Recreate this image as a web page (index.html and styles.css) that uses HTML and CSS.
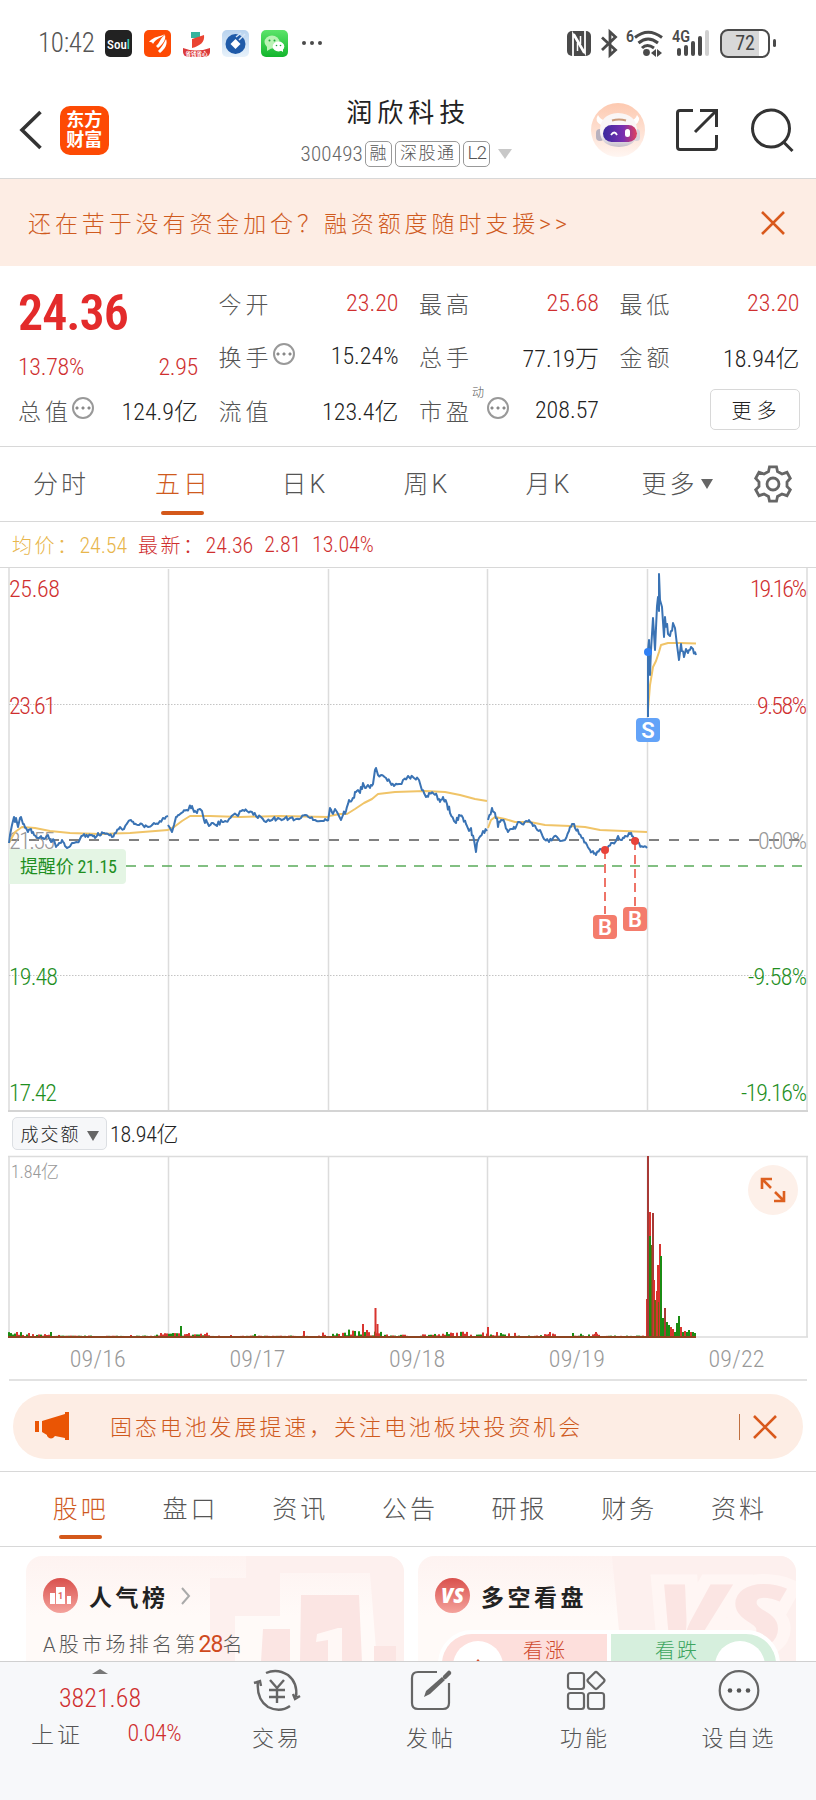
FILE: index.html
```html
<!DOCTYPE html>
<html lang="zh-CN">
<head>
  <meta charset="UTF-8">
  <title>润欣科技 300493</title>
  <link rel="stylesheet" href="styles.css">
</head>
<body>

<div class="status-bar">
  <span class="clock">10:42</span>
  <div class="app-icons">
    <span class="app soul">Sou<i>l</i></span>
    <span class="app east">
      <svg width="27" height="27" viewBox="0 0 27 27" fill="#fff"><path d="M5 12C10 6 16 7 21 4C18 8 12 8 9 14C8 12 7 12 5 12Z"/><path d="M12 16C16 13 16 8 21 5C22 9 20 13 14 18Z"/><path d="M14 21C18 17 20 13 22 9C24 14 21 19 16 23Z"/></svg>
    </span>
    <span class="app">
      <svg width="27" height="27" viewBox="0 0 27 27"><path d="M8 2h9v6h-9z" fill="#35b39c"/><path d="M9 9L21 5C22 12 17 16 9 18Z" fill="#ea4432"/><path d="M0 18Q13 23 27 18V23Q27 27 22 27H5Q0 27 0 23Z" fill="#dc3a3a"/><text x="13.5" y="25.5" font-size="5.5" font-weight="700" fill="#fff" text-anchor="middle">省钱省心</text></svg>
    </span>
    <span class="app ccb">
      <svg width="27" height="27" viewBox="0 0 27 27"><circle cx="13.5" cy="14" r="10" fill="#1f5aa8"/><path d="M13.5 9l5 5-5 5-5-5z" fill="#fff"/><path d="M14 7L19 3M17 10L23 4" stroke="#d8e6f6" stroke-width="1.5"/></svg>
    </span>
    <span class="app wechat">
      <svg width="27" height="27" viewBox="0 0 27 27"><ellipse cx="11" cy="12" rx="7.5" ry="6.5" fill="#b9f3b4"/><path d="M6 16v5l5-3z" fill="#b9f3b4"/><ellipse cx="17.5" cy="16.5" rx="5.8" ry="5" fill="#fff"/><path d="M19 20l3 2v-4z" fill="#fff"/><g fill="#1da838"><circle cx="8.5" cy="10.5" r="1"/><circle cx="13.5" cy="10.5" r="1"/><circle cx="15.5" cy="15.5" r=".8"/><circle cx="19.5" cy="15.5" r=".8"/></g></svg>
    </span>
  </div>
  <svg class="dots" width="20" height="6" viewBox="0 0 20 6" fill="#4a4a4a"><circle cx="2" cy="3" r="2"/><circle cx="10" cy="3" r="2"/><circle cx="18" cy="3" r="2"/></svg>
  <div class="signals">
    <svg class="nfc" width="24" height="25" viewBox="0 0 24 25"><rect width="24" height="25" rx="5" fill="#4a4a4a"/><path d="M6 26V3L17 22" fill="none" stroke="#fff" stroke-width="1.8"/><path d="M18 -1V22L7 3" fill="none" stroke="#fff" stroke-width="1.8"/><path d="M10.500 12v8M13.500 5v8" stroke="#fff" stroke-width="1.500"/></svg>
    <svg class="bt" width="17" height="27" viewBox="0 0 17 27" fill="none" stroke="#4a4a4a" stroke-width="2.800"><path d="M1 7.500L14.500 20L9 25V2L14.500 7L1 20"/></svg>
    <svg class="wifi" width="38" height="28" viewBox="0 0 38 28"><text x="0" y="13" font-size="17" font-weight="600" fill="#4a4a4a" textLength="8" lengthAdjust="spacingAndGlyphs">6</text><g fill="none" stroke="#4a4a4a" stroke-width="3"><path d="M9 8.500Q22 -2 36 8.500"/><path d="M12.500 14Q22 6 32 14"/><path d="M16 19Q21 14 28 19"/></g><circle cx="20.500" cy="23.500" r="3.400" fill="#4a4a4a"/><path d="M25 24l5-4v8zM31 20l5 4-5 4z" fill="#4a4a4a"/></svg>
    <svg class="cell" width="38" height="28" viewBox="0 0 38 28"><text x="0" y="13" font-size="17" font-weight="600" fill="#4a4a4a" textLength="18" lengthAdjust="spacingAndGlyphs">4G</text><g fill="#4a4a4a"><rect x="5" y="19" width="4" height="8" rx="2"/><rect x="12" y="16" width="4" height="11" rx="2"/><rect x="19" y="12" width="4" height="15" rx="2"/><rect x="26" y="7" width="4" height="20" rx="2"/></g><rect x="33" y="1" width="4" height="26" rx="2" fill="#d0d0d0"/></svg>
    <span class="battery"><b>72</b></span>
    <span class="battery-tip"></span>
  </div>
</div>

<header class="header">
  <svg class="back" width="24" height="40" viewBox="0 0 24 40" fill="none" stroke="#333" stroke-width="3.600"><path d="M21.500 2L3 20L21.500 38"/></svg>
  <div class="logo">东方<br>财富</div>
  <div class="title">
    <h1>润欣科技</h1>
    <div class="code">
      <span class="num">300493</span>
      <span class="tag">融</span>
      <span class="tag">深股通</span>
      <span class="tag l2">L2</span>
      <span class="tri"></span>
    </div>
  </div>
  <svg class="robot" width="54" height="54" viewBox="0 0 54 54">
    <defs>
      <linearGradient id="sky" x1="0" y1="0" x2="0" y2="1"><stop offset="0" stop-color="#fdc9b0"/><stop offset="1" stop-color="#fff6f2"/></linearGradient>
      <linearGradient id="visor"><stop offset="0" stop-color="#3a2b9e"/><stop offset=".6" stop-color="#7a2fb0"/><stop offset="1" stop-color="#e0405c"/></linearGradient>
      <linearGradient id="shell" x1="0" y1="0" x2="0" y2="1"><stop offset=".6" stop-color="#faf6f6"/><stop offset="1" stop-color="#c6bfca"/></linearGradient>
    </defs>
    <circle cx="27" cy="27" r="27" fill="url(#sky)"/>
    <path d="M10 22Q3 18 7 12Q10 18 15 17M44 22Q51 17 46 12Q44 18 39 17" fill="#fff"/>
    <rect x="5" y="26" width="8" height="12" rx="4" fill="#b9b2bf"/><rect x="42" y="26" width="7" height="12" rx="3.500" fill="#d8d2da"/>
    <path d="M9 28Q9 11 27 10Q46 11 46 28Q47 43 28 44Q9 43 9 28Z" fill="url(#shell)"/>
    <path d="M21 17.500q7-2 14 0" stroke="#c99878" stroke-width="2" fill="none"/>
    <rect x="12" y="22" width="34" height="17" rx="8.500" fill="url(#visor)"/>
    <path d="M20 32q3.500-5 6 0" fill="none" stroke="#fff" stroke-width="1.800"/><rect x="34" y="26" width="5" height="8" rx="2.500" fill="#fff"/>
  </svg>
  <svg class="share" width="42" height="42" viewBox="0 0 42 42" fill="none" stroke="#333" stroke-width="3"><path d="M17 1.500H4Q1.500 1.500 1.500 4V38Q1.500 40.500 4 40.500H38Q40.500 40.500 40.500 38V26"/><path d="M24 1.500H40.500V18M40 2L19 23"/></svg>
  <svg class="search" width="44" height="44" viewBox="0 0 44 44" fill="none" stroke="#333" stroke-width="3"><circle cx="21" cy="20.500" r="18.500"/><path d="M33.500 34L42.500 43"/></svg>
</header>

<div class="promo">
  <span>还在苦于没有资金加仓？融资额度随时支援&gt;&gt;</span>
  <svg width="24" height="24" viewBox="0 0 24 24" stroke="#d9591c" stroke-width="2.600"><path d="M1 1L23 23M23 1L1 23"/></svg>
</div>

<section class="quote">
  <div class="main-price">
    <strong>24.36</strong>
    <p class="num red"><span>13.78%</span><span>2.95</span></p>
  </div>
  <div class="cell"><label>今开</label><span class="num red">23.20</span></div>
  <div class="cell"><label>最高</label><span class="num red">25.68</span></div>
  <div class="cell"><label>最低</label><span class="num red">23.20</span></div>
  <div class="cell"><label>换手</label><i class="more-dots"></i><span class="num">15.24%</span></div>
  <div class="cell"><label>总手</label><span class="num">77.19万</span></div>
  <div class="cell"><label>金额</label><span class="num">18.94亿</span></div>
  <div class="cell"><label>总值</label><i class="more-dots"></i><span class="num">124.9亿</span></div>
  <div class="cell"><label>流值</label><span class="num">123.4亿</span></div>
  <div class="cell"><label>市盈<sup>动</sup></label><i class="more-dots"></i><span class="num">208.57</span></div>
  <div class="cell"><button class="more-btn">更多</button></div>
</section>

<nav class="period-tabs">
  <a>分时</a>
  <a class="active">五日</a>
  <a>日K</a>
  <a>周K</a>
  <a>月K</a>
  <a class="more">更多<span class="tri dark"></span></a>
  <svg width="38" height="38" viewBox="0 0 38 38" fill="none" stroke="#666" stroke-width="2.800"><path d="M15.500 1.800H22.500L23.500 6.500L28 9L33 7.300L36.300 13.300L33 17V21.500L36.300 24.700L33 30.700L28 29L23.500 31.500L22.500 36.200H15.500L14.500 31.500L10 29L5 30.700L1.700 24.700L5 21.500V17L1.700 13.300L5 7.300L10 9L14.500 6.500Z"/><circle cx="19" cy="19" r="6"/></svg>
</nav>

<div class="legend num">
  <span class="avg"><em>均价：</em>24.54</span>
  <span><em>最新：</em>24.36</span>
  <span>2.81</span>
  <span>13.04%</span>
</div>

<svg class="chart" width="816" height="544" viewBox="0 568 816 544">
  <g class="grid">
    <path d="M9 568V1111M168.500 569V1111M328.500 569V1111M487.500 569V1111M647.500 569V1111M807 568V1111"/>
    <path class="heavy" d="M8 1111H808"/>
    <path class="dotted" d="M9 704.500H807M9 975.500H807"/>
  </g>
  <path class="zero" d="M9 840H807"/>
  <path class="remind" d="M126 866H807"/>
  <g class="labels">
    <text class="flat" x="9" y="849" textLength="46">21.55</text>
  </g>
  <g id="priceLines"></g>
  <g class="labels">
    <text class="up" x="9" y="597" textLength="51">25.68</text>
    <text class="up" x="9" y="714" textLength="47">23.61</text>
    <text class="down" x="9" y="985" textLength="49">19.48</text>
    <text class="down" x="9" y="1101" textLength="48">17.42</text>
    <text class="up" x="750" y="597" textLength="57">19.16%</text>
    <text class="up" x="757" y="714" textLength="50">9.58%</text>
    <text class="flat" x="758" y="849" textLength="49">0.00%</text>
    <text class="down" x="748" y="985" textLength="59">-9.58%</text>
    <text class="down" x="741" y="1101" textLength="66">-19.16%</text>
  </g>
  <path d="M9 849H122Q126 849 126 853V880Q126 884 122 884H9Z" fill="#e4f5e4"/>
  <text class="remind-text" x="20" y="873" textLength="97">提醒价 21.15</text>
  <path class="trade" d="M605 850V914M635 841V907"/>
  <circle cx="605" cy="850" r="4" fill="#e8433a"/>
  <circle cx="635" cy="841" r="4" fill="#e8433a"/>
  <circle cx="648" cy="652" r="4" fill="#2f80f5"/>
  <g class="marks">
    <rect x="593" y="915" width="24" height="24" rx="4" fill="#f47c6c"/><text x="605" y="935">B</text>
    <rect x="623" y="907" width="24" height="24" rx="4" fill="#f47c6c"/><text x="635" y="927">B</text>
    <rect x="636" y="718" width="24" height="24" rx="4" fill="#63a3f8"/><text x="648" y="738">S</text>
  </g>
</svg>

<div class="volume-head num">
  <button>成交额<span class="tri dark"></span></button>
  <span>18.94亿</span>
</div>

<div class="volume">
  <svg class="chart" width="816" height="182" viewBox="0 1156 816 182">
    <g class="grid"><path d="M8 1156.500H808M9 1156V1337M168.500 1156V1337M328.500 1156V1337M487.500 1156V1337M647.500 1156V1337M807 1156V1337M8 1337H808"/></g>
    <g id="bars"></g>
    <text class="scale" x="11" y="1178" textLength="48">1.84亿</text>
  </svg>
  <span class="expand">
    <svg width="26" height="26" viewBox="0 0 26 26" fill="none" stroke="#dd6020" stroke-width="2.600"><path d="M12 2H2V12M2 2L11 11M15 15L24 24M24 14V24H14"/></svg>
  </span>
</div>

<div class="dates num"><span>09/16</span><span>09/17</span><span>09/18</span><span>09/19</span><span>09/22</span></div>

<div class="notice">
  <svg width="34" height="29" viewBox="0 0 34 29" fill="#ea5504"><path d="M0 9h4v11H0zM7 9L30 2V0h4v28h-4v-2l-10-2q-4 5-8 0v-1L7 20z"/></svg>
  <span>固态电池发展提速，关注电池板块投资机会</span>
  <i></i>
  <svg width="24" height="24" viewBox="0 0 24 24" stroke="#d9591c" stroke-width="2.600"><path d="M1 1L23 23M23 1L1 23"/></svg>
</div>

<nav class="info-tabs">
  <a class="active">股吧</a><a>盘口</a><a>资讯</a><a>公告</a><a>研报</a><a>财务</a><a>资料</a>
</nav>

<section class="cards">
  <div class="card">
    <svg class="card-bg" width="194" height="106" viewBox="0 0 194 106"><path d="M36 0H194V106H167L160 17H70V60H25V106H0V22H36Z" fill="#fdf0ee"/><path d="M91 39H149L152 106H90ZM53 73H80V106H51ZM164 90H186V106H164Z" fill="#fbe5e3"/><path d="M107 78L128 72H132V106H118V84L106 86Z" fill="#fff8f6"/></svg>
    <h3>
      <svg width="35" height="35" viewBox="0 0 35 35"><defs><linearGradient id="ball" x1="0" y1="0" x2="0" y2="1"><stop offset="0" stop-color="#d9504c"/><stop offset="1" stop-color="#f4a29c"/></linearGradient></defs><circle cx="17.500" cy="17.500" r="17.500" fill="url(#ball)"/><path d="M7 15h5v11H7zM13 9h9v17h-9zM24 18h4v8h-4z" fill="#fff"/><text x="17.500" y="21" font-size="9" font-weight="700" text-anchor="middle" fill="#df6560">1</text></svg>
      人气榜
      <svg width="11" height="18" viewBox="0 0 11 18" fill="none" stroke="#aaa" stroke-width="2"><path d="M2 1L9 9L2 17"/></svg>
    </h3>
    <p>A股市场排名第<b>28</b>名</p>
  </div>
  <div class="card">
    <svg class="card-bg" width="184" height="106" viewBox="0 0 184 106"><path d="M0 0H184V106H10Z" fill="#fdf0ee"/><text class="vs-bg" x="44" y="92" textLength="130" lengthAdjust="spacingAndGlyphs">VS</text></svg>
    <h3>
      <svg width="35" height="35" viewBox="0 0 35 35"><circle cx="17.500" cy="17.500" r="17.500" fill="url(#ball)"/><text class="vs" x="6" y="25" textLength="23" lengthAdjust="spacingAndGlyphs">VS</text></svg>
      多空看盘
    </h3>
    <div class="vote">
      <div class="bull"><i><svg width="50" height="50" viewBox="0 0 50 50"><path d="M25 18l12 14H13z" fill="#d8502e"/></svg></i>看涨</div>
      <div class="bear">看跌<i></i></div>
    </div>
  </div>
</section>

<footer class="bottom-bar">
  <div class="index">
    <span class="tri up"></span>
    <span class="num red">3821.68</span>
    <p><label>上证</label><span class="num red">0.04%</span></p>
  </div>
  <a>
    <svg width="48" height="42" viewBox="0 0 48 42" fill="none" stroke="#666" stroke-width="2.400"><path d="M13 4Q24 -1 35 6Q45 14 43 28M47 27L42 30L40 25"/><path d="M37 37Q27 44 15 38Q3 30 5 12M1 14L7 12L8 17"/><path d="M17 11L24 19L31 11M16 21H32M16 28H32M24 19V34"/></svg>
    交易
  </a>
  <a>
    <svg width="42" height="42" viewBox="0 0 42 42" fill="none" stroke="#666" stroke-width="2.200"><path d="M27 3H8Q2 3 2 9V34Q2 40 8 40H33Q39 40 39 34V14"/><path d="M14 28L16 22L32 8L35 11L20 25Z" fill="#666" stroke="none"/><path d="M35 8L39 4" stroke-width="4.500" stroke-linecap="round"/></svg>
    发帖
  </a>
  <a>
    <svg width="40" height="42" viewBox="0 0 40 42" fill="none" stroke="#666" stroke-width="2.200"><rect x="3" y="4" width="16" height="16" rx="2.500"/><rect x="3" y="24" width="16" height="16" rx="2.500"/><rect x="23" y="24" width="16" height="16" rx="2.500"/><rect x="24.500" y="5" width="13" height="13" rx="2" transform="rotate(45 31 11.500)"/></svg>
    功能
  </a>
  <a>
    <svg width="42" height="42" viewBox="0 0 42 42"><circle cx="21" cy="21.500" r="19.300" fill="none" stroke="#666" stroke-width="2.200"/><g fill="#555"><circle cx="12" cy="21.500" r="2.300"/><circle cx="21" cy="21.500" r="2.300"/><circle cx="30" cy="21.500" r="2.300"/></g></svg>
    设自选
  </a>
</footer>

<script src="chart.js"></script>
</body>
</html>
```
FILE: styles.css
```css
body {
  margin: 0;
  width: 816px;
  height: 1800px;
  overflow: hidden;
  background: #fff;
  color: #555;
  font-family: Roboto, "Noto Sans CJK SC", sans-serif;
  font-weight: 300;
  display: flex;
  flex-direction: column;
}

body > * {
  flex-shrink: 0;
  box-sizing: border-box;
}

h1, h3, p {
  margin: 0;
  font-weight: inherit;
}

svg {
  display: block;
  overflow: visible;
}

button {
  font: inherit;
  letter-spacing: inherit;
}

.num {
  font-stretch: 80%;
  color: #222;
}

.red {
  color: #cf2f2f;
}

.tri {
  display: inline-block;
  border: 7px solid transparent;
  border-top: 10px solid #c8c8c8;
  border-bottom: 0;
}

.tri.dark {
  border-width: 10px 6px 0;
  border-top-color: #666;
}

/* status bar */
.status-bar {
  height: 86px;
  padding-left: 38px;
  display: flex;
  align-items: center;
}

.clock {
  width: 67px;
  font-size: 27px;
  font-stretch: 85%;
  letter-spacing: -.3px;
}

.app-icons {
  display: flex;
  gap: 12px;
}

.app {
  width: 27px;
  height: 27px;
  border-radius: 5px;
  overflow: hidden;
}

.soul {
  background: #222;
  color: #fff;
  font-size: 13px;
  font-stretch: 75%;
  font-weight: 500;
  line-height: 29px;
  text-align: center;
}

.soul i {
  font-style: normal;
  color: #3cd2c4;
}

.east {
  background: #fd4a04;
}

.ccb {
  background: linear-gradient(#b9d3ee, #e8f2fb);
}

.wechat {
  background: linear-gradient(#5ce46a, #12b52c);
}

.dots {
  margin-left: 14px;
}

.signals {
  margin-left: auto;
  margin-right: 40px;
  display: flex;
  align-items: center;
}

.bt {
  margin-left: 10px;
}

.wifi {
  margin-left: 8px;
}

.signals .cell {
  margin-left: 8px;
}

.battery {
  width: 50px;
  height: 29px;
  margin-left: 10px;
  box-sizing: border-box;
  border: 2px solid #4a4a4a;
  border-radius: 8px;
  background: linear-gradient(90deg, #d8d8d8 37px, #fff 37px);
  text-align: center;
  line-height: 25px;
}

.battery b {
  font-size: 20px;
  font-weight: 400;
  font-stretch: 80%;
  color: #444;
}

.battery-tip {
  width: 3px;
  height: 8px;
  margin-left: 3px;
  border-radius: 2px;
  background: #4a4a4a;
}

/* header */
.header {
  height: 93px;
  padding: 0 22px 0 19px;
  border-bottom: 1px solid #d8d8d8;
  display: flex;
  align-items: center;
}

.back {
  margin-top: -4px;
}

.logo {
  width: 49px;
  height: 49px;
  margin: -4px 0 0 17px;
  box-sizing: border-box;
  padding-top: 4px;
  border-radius: 10px;
  background: #fd4a04;
  color: #fff;
  font-size: 18px;
  font-weight: 700;
  line-height: 20px;
  text-align: center;
}

.title {
  width: 300px;
  margin: 3px 0 0 149px;
  display: flex;
  flex-direction: column;
  align-items: center;
}

.title h1 {
  margin-left: 4px;
  color: #222;
  font-size: 26px;
  font-weight: 400;
  letter-spacing: 5px;
  line-height: 43px;
}

.code {
  display: flex;
  align-items: center;
  gap: 3px;
  height: 38px;
  padding-bottom: 3px;
  font-size: 21px;
}

.code .num {
  width: 61px;
  color: #666;
  letter-spacing: .2px;
}

.tag {
  height: 26px;
  box-sizing: border-box;
  border: 1.500px solid #999;
  border-radius: 5px;
  padding: 0 3px 0 4px;
  font-size: 17px;
  line-height: 22px;
  letter-spacing: 1.500px;
}

.l2 {
  font-size: 19px;
  letter-spacing: -1px;
}

.code .tri {
  margin-left: 5px;
}

.robot {
  margin: -4px 0 0 36px;
}

.share {
  margin: -4px 0 0 31px;
}

.search {
  margin: -4px 0 0 32px;
}

.promo {
  height: 87px;
  padding: 0 31px 0 28px;
  background: #fdede4;
  color: #cf5a1e;
  font-size: 23px;
  letter-spacing: 3.900px;
  display: flex;
  align-items: center;
  justify-content: space-between;
}

.promo span {
  margin-top: -2px;
}

/* quote */
.quote {
  height: 181px;
  padding: 10px 17px 0 18px;
  border-bottom: 1px solid #d8d8d8;
  display: grid;
  grid-template-columns: repeat(4, 180px);
  grid-template-rows: repeat(3, 53.500px);
  column-gap: 20.500px;
}

.main-price {
  grid-row: span 2;
  display: flex;
  flex-direction: column;
}

.main-price strong {
  height: 74px;
  line-height: 74px;
  font-size: 50px;
  font-stretch: 78%;
  font-weight: 600;
  letter-spacing: -1px;
  color: #e32b2b;
}

.main-price p {
  display: flex;
  justify-content: space-between;
  font-size: 24px;
  line-height: 34px;
  letter-spacing: -.3px;
  color: #cf2f2f;
}

.quote .cell {
  display: flex;
  align-items: center;
}

.quote label {
  position: relative;
  font-size: 23px;
  letter-spacing: 4px;
}

.quote sup {
  position: absolute;
  left: 53px;
  top: -8px;
  font-size: 12px;
  line-height: 16px;
  letter-spacing: 0;
}

.quote label:has(sup) {
  margin-right: 14px;
}

.cell .num {
  margin-left: auto;
  font-size: 24px;
}

.more-dots {
  width: 18px;
  height: 18px;
  margin-top: -4px;
  border: 2px solid #999;
  border-radius: 50%;
  background:
    radial-gradient(circle, #888 1.300px, transparent 1.800px) 0 0 / 6px 18px repeat-x;
}

.more-btn {
  width: 90px;
  height: 41px;
  margin-left: auto;
  padding-left: 10px;
  border: 1px solid #d8d8d8;
  border-radius: 5px;
  background: #fff;
  color: #222;
  font-size: 20px;
  letter-spacing: 5px;
}

/* tabs */
.period-tabs {
  height: 75px;
  border-bottom: 1px solid #d8d8d8;
  display: flex;
  align-items: center;
}

.period-tabs a,
.info-tabs a {
  width: 122px;
  line-height: 75px;
  position: relative;
  font-size: 25px;
  letter-spacing: 3px;
  text-align: center;
}

.period-tabs .more {
  width: 134px;
}

.period-tabs .tri {
  margin: 0 0 4px 3px;
}

.period-tabs svg {
  margin-left: 10px;
}

a.active {
  color: #cf5a1e;
}

a.active::after {
  content: "";
  position: absolute;
  left: calc(50% - 22px);
  bottom: 7px;
  width: 43px;
  height: 4px;
  border-radius: 2px;
  background: #d4581a;
}

.legend {
  height: 46px;
  padding: 0 12px;
  border-bottom: 1px solid #d8d8d8;
  display: flex;
  align-items: center;
  gap: 11px;
  font-size: 22px;
  letter-spacing: -.1px;
  color: #cf2f2f;
}

.legend em {
  font-style: normal;
  font-size: 20px;
  letter-spacing: 2.500px;
}

.legend .avg {
  color: #e8b64c;
}

/* charts */
.grid {
  fill: none;
  stroke: #dcdcdc;
  stroke-width: 1.500;
}

.grid .heavy {
  stroke: #d4d4d4;
  stroke-width: 2;
}

.grid .dotted {
  stroke: #c4c4c4;
  stroke-width: 1;
  stroke-dasharray: 1.500 1.500;
}

.zero {
  stroke: #808080;
  stroke-width: 2;
  stroke-dasharray: 10 10;
}

.remind {
  stroke: #5aaa5a;
  stroke-width: 1.500;
  stroke-dasharray: 10 8;
}

#priceLines {
  fill: none;
  stroke-linejoin: round;
}

.price {
  stroke: #3a73b4;
  stroke-width: 2;
}

.average {
  stroke: #f0c468;
  stroke-width: 2;
}

.labels {
  font-size: 24px;
  font-stretch: 78%;
}

.up {
  fill: #cf2f2f;
}

.down {
  fill: #1f8f1f;
}

.flat {
  fill: #999;
}

.remind-text {
  fill: #1f8f1f;
  font-size: 18px;
  font-stretch: 85%;
  font-weight: 400;
}

.trade {
  stroke: #ee7468;
  stroke-width: 2;
  stroke-dasharray: 9 5;
}

.marks text {
  font-size: 22px;
  font-weight: 600;
  fill: #fff;
  text-anchor: middle;
}

.volume-head {
  height: 44px;
  padding: 0 0 2px 12px;
  display: flex;
  align-items: center;
  gap: 3px;
  font-size: 22px;
  letter-spacing: -.3px;
}

.volume-head button {
  width: 95px;
  height: 33px;
  padding: 0;
  border: 1px solid #dcdfe3;
  border-radius: 5px;
  background: #f6f7f9;
  color: #222;
  font-size: 18px;
  letter-spacing: 2px;
}

.volume-head span {
  margin-top: -3px;
}

.volume-head .tri {
  margin-left: 6px;
}

.volume {
  position: relative;
}

.scale {
  font-size: 18px;
  font-stretch: 80%;
  fill: #999;
}

.expand {
  position: absolute;
  left: 748px;
  top: 9px;
  width: 50px;
  height: 50px;
  border-radius: 50%;
  background: #fdf0e9;
  display: flex;
  align-items: center;
  justify-content: center;
}

.dates {
  height: 43px;
  width: 798px;
  margin-left: 9px;
  padding-left: 9px;
  border-bottom: 2px solid #e2e2e2;
  display: grid;
  grid-template-columns: repeat(5, 159.700px);
  align-items: center;
  text-align: center;
  color: #999;
  font-size: 24px;
  letter-spacing: .2px;
}

.notice {
  height: 65px;
  margin: 13px 13px 12px;
  padding: 0 26px 0 22px;
  border-radius: 33px;
  background: #fdede4;
  color: #cf5a1e;
  display: flex;
  align-items: center;
}

.notice span {
  margin: -4px 0 0 41px;
  font-size: 22px;
  letter-spacing: 2.900px;
}

.notice i {
  width: 1px;
  height: 26px;
  margin: 0 13px 0 auto;
  background: #c07040;
}

.info-tabs {
  height: 76px;
  padding-left: 26px;
  border-top: 1px solid #d8d8d8;
  border-bottom: 1px solid #d8d8d8;
  display: flex;
}

.info-tabs a {
  width: 109.700px;
}

/* cards */
.cards {
  height: 114px;
  padding: 9px 20px 0 26px;
  display: flex;
  gap: 14px;
  overflow: hidden;
}

.card {
  position: relative;
  width: 378px;
  height: 150px;
  border-radius: 16px;
  overflow: hidden;
  background: linear-gradient(#fef3f1, #fffaf8 60px);
}

.card-bg {
  position: absolute;
  right: 0;
  top: 0;
  overflow: hidden;
}

.vs,
.vs-bg {
  font-family: "Open Sans", sans-serif;
  font-size: 21px;
  font-style: italic;
  font-weight: 800;
  fill: #fff;
}

.vs-bg {
  font-size: 88px;
  fill: #fbe5e3;
  stroke: #fff6f4;
  stroke-width: 20px;
  paint-order: stroke;
}

.card h3 {
  position: relative;
  height: 35px;
  margin: 22px 0 0 17px;
  display: flex;
  align-items: center;
  gap: 11px;
  color: #222;
  font-size: 23px;
  font-weight: 700;
  letter-spacing: 3.500px;
}

.card h3 text {
  letter-spacing: 0;
}

.card p {
  position: relative;
  margin: 18px 0 0 17px;
  font-size: 20px;
  line-height: 28px;
  letter-spacing: 3.300px;
}

.card p b {
  color: #cf4a1e;
  font-size: 23px;
  letter-spacing: -1px;
}

.vote {
  position: relative;
  width: 334px;
  height: 66px;
  margin: 17px 0 0 20px;
  border: 4px solid #fff;
  border-radius: 34px;
  overflow: hidden;
  display: flex;
  gap: 4px;
  background: #fff;
  font-size: 20px;
  line-height: 34px;
}

.vote div {
  flex: 1;
  display: flex;
  gap: 20px;
  letter-spacing: 2px;
}

.vote i {
  width: 50px;
  height: 50px;
  margin-top: 7px;
  border-radius: 50%;
  background: #fff;
}

.bull {
  padding-left: 11px;
  background: #fddfdc;
  color: #cf4a2e;
}

.bear {
  justify-content: flex-end;
  padding-right: 11px;
  background: #d6efdd;
  color: #3da55f;
}

.vote .bear {
  gap: 16px;
}

/* bottom bar */
.bottom-bar {
  height: 139px;
  border-top: 1px solid #d0d0d0;
  background: #f7f8fa;
  display: flex;
}

.bottom-bar a {
  width: 154px;
  padding-top: 7px;
  display: flex;
  flex-direction: column;
  align-items: center;
  gap: 9px;
  font-size: 22px;
  letter-spacing: 3px;
}

.index {
  width: 200px;
  display: flex;
  flex-direction: column;
  align-items: center;
}

.tri.up {
  margin-top: 7px;
  border-width: 0 8px 5px;
  border-bottom: 5px solid #777;
}

.index .num {
  font-size: 26px;
  line-height: 48px;
}

.index p {
  width: 150px;
  margin: -13px 0 0 12px;
  display: flex;
  align-items: center;
  justify-content: space-between;
}

.index label {
  font-size: 23px;
  letter-spacing: 3px;
}

.index p .num {
  font-size: 24px;
  letter-spacing: -.5px;
}
```
FILE: chart.js
```js
// five trading days, x/y in chart units
const priceDays = [
  '9,843 10,835 12,825 14,817 15,822 16,818 18,827 20,818 21,817 23,824 26,828 28,832 31,829 34,835 38,838 41,836 44,839 48,835 51,842 54,840 56,847 59,843 62,840 65,846 67,848 72,843 76,842 80,839 84,834 88,837 92,835 95,838 98,833 101,835 104,833 108,834 112,837 116,833 120,827 124,829 128,822 131,820 134,824 138,825 142,824 148,827 154,823 158,824 163,818 168,816',
  '168,825 170,828 172,832 174,825 176,817 179,815 183,812 186,810 189,808 192,806 194,812 197,813 200,809 202,811 204,820 207,822 209,826 213,823 217,826 221,820 225,821 229,819 233,815 238,816 243,810 247,811 252,812 256,816 261,817 266,822 272,820 278,818 284,819 290,818 296,819 301,818 305,815 310,818 315,820 321,821 328,821',
  '328,821 330,808 333,814 335,809 337,812 339,816 341,820 343,815 346,811 349,800 352,800 355,792 358,790 360,793 363,783 365,788 368,785 370,788 373,784 375,770 376,768 378,775 382,775 386,778 390,782 394,786 399,784 403,780 408,776 414,778 419,780 421,787 424,793 426,797 429,793 434,794 437,796 440,802 443,797 447,804 450,813 454,821 456,823 459,815 463,818 466,824 469,831 471,828 474,840 476,852 477,843 479,838 483,831 487,831',
  '488,820 492,808 495,813 498,827 501,820 505,824 508,832 513,829 516,827 518,822 522,824 526,821 529,820 533,826 536,828 540,830 544,839 549,842 553,838 557,837 560,841 565,840 569,831 572,824 575,828 579,834 583,838 587,845 590,850 593,851 596,855 600,849 605,850 608,847 611,843 616,841 618,836 622,840 625,836 629,833 632,836 635,838 639,843 643,847 647,848',
  '648,717 648,650 649,640 650,675 651,650 653,618 655,650 657,606 658,597 659,611 659,574 660,600 662,607 664,637 665,617 668,634 670,636 673,623 675,628 677,645 679,660 681,644 684,657 686,649 688,653 691,647 693,649 696,655'
];

const averageDays = [
  '9,843 15,832 22,827 35,828 50,831 70,833 100,834 130,833 168,830',
  '168,830 174,827 182,821 190,816 210,816 240,817 280,816 328,817',
  '329,816 340,814 347,814 355,809 364,803 372,799 378,794 395,792 425,791 445,792 460,795 475,799 487,801',
  '488,828 491,820 495,817 505,819 515,822 530,822 545,825 570,826 585,827 600,830 647,832',
  '648,710 650,685 653,667 656,661 659,652 661,645 668,643 680,643 696,643.5'
];

let seed = 7;
function rand() {
  seed = (seed * 16807) % 2147483647;
  return seed / 2147483647;
}

// add small ticks between the main points
function ticks(day) {
  const pts = day.split(' ').map(p => p.split(',').map(Number));
  const out = [pts[0]];
  for (let i = 1; i < pts.length; i++) {
    const [x0, y0] = pts[i - 1];
    const [x1, y1] = pts[i];
    if (x1 - x0 > 2) {
      out.push([(x0 + x1) / 2 - 0.6, (y0 + y1) / 2 + (rand() - 0.5) * 4]);
      out.push([(x0 + x1) / 2 + 0.6, (y0 + y1) / 2 + (rand() - 0.5) * 4]);
    }
    out.push([x1, y1]);
  }
  return out.join(' ');
}

let lines = '';
averageDays.forEach(d => lines += `<polyline class="average" points="${d}"/>`);
priceDays.forEach(d => lines += `<polyline class="price" points="${ticks(d)}"/>`);
document.getElementById('priceLines').innerHTML = lines;

const RED = '#d8342f';
const GREEN = '#1b8c14';
const base = 1338;
let bars = '';

function bar(x, h, color, w = 2) {
  bars += `<rect x="${x}" y="${base - h}" width="${w}" height="${h}" fill="${color}"/>`;
}

// quiet volume, a bit busier around these stretches
const busy = [[8, 30, 5], [30, 60, 2.5], [155, 175, 4], [175, 210, 4], [322, 345, 4], [345, 382, 7], [382, 405, 2], [420, 445, 3], [445, 487, 5], [487, 515, 5], [540, 556, 3], [580, 600, 3]];
for (let x = 8; x < 646; x += 2) {
  const zone = busy.find(z => x >= z[0] && x < z[1]);
  const h = 1.5 + rand() * (zone ? zone[2] : 1);
  bar(x, h, rand() > 0.5 ? RED : GREEN);
}

[[50, 6, GREEN], [130, 3, RED], [180, 12, GREEN], [230, 3, RED], [254, 4, GREEN], [303, 7, RED], [362, 14, RED], [374.5, 30, RED], [376.5, 14, RED], [487, 11, RED], [549, 6, RED], [572, 5, GREEN], [595, 6, RED],
 [646, 39, RED], [647, 182, '#a83a36'], [649, 126, RED], [649, 102, GREEN], [651, 93, '#6a6410'], [652, 125, '#a83a36'], [653, 58, RED], [654, 38, '#6a6410'], [656, 47, RED], [657, 73, RED], [658, 36, '#6a6410'], [659, 94, RED], [660, 82, GREEN], [662, 20, GREEN], [664, 30, '#a83a36'], [666, 16, GREEN], [668, 13, GREEN], [670, 11, RED], [672, 9, RED], [674, 6, GREEN], [676, 15, GREEN], [678, 22, GREEN], [680, 11, RED], [682, 6, GREEN], [684, 7, RED], [686, 6, GREEN], [688, 8, GREEN], [690, 6, RED], [692, 6, GREEN], [694, 5, GREEN]
].forEach(b => bar(...b));
bars += `<rect x="8" y="${base - 2}" width="688" height="2" fill="#8c4420"/>`;

document.getElementById('bars').innerHTML = bars;
```
